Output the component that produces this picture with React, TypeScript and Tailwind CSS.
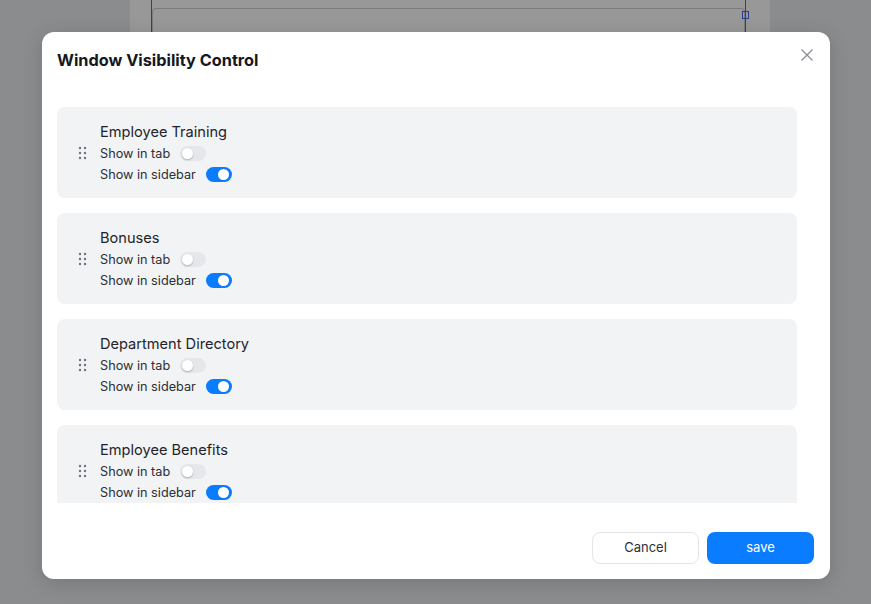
import React from "react";

const items = ["Employee Training", "Bonuses", "Department Directory", "Employee Benefits"];

function Toggle({ on }: { on: boolean }) {
  return (
    <span
      className={
        on
          ? "relative inline-flex h-[15px] w-[26px] items-center rounded-full bg-[#0a7cff]"
          : "relative inline-flex h-[15px] w-[26px] items-center rounded-full bg-[#e6e7ea]"
      }
    >
      <span
        className={
          on
            ? "absolute left-[12px] h-[11px] w-[11px] rounded-full bg-white"
            : "absolute left-[2px] h-[11px] w-[11px] rounded-full bg-white shadow-[0_1px_2px_rgba(0,0,0,0.25)]"
        }
      />
    </span>
  );
}

function Handle() {
  return (
    <svg width="10" height="14" viewBox="0 0 10 14" className="shrink-0">
      {[2, 7, 12].map((y) =>
        [2, 7].map((x) => <circle key={`${x}-${y}`} cx={x} cy={y} r="1.2" fill="#6b7280" />)
      )}
    </svg>
  );
}

function Card({ title }: { title: string }) {
  return (
    <div className="flex h-[91px] shrink-0 items-center rounded-lg bg-[#f2f3f5] pl-[20px]">
      <div className="w-[23px] pl-[1px]">
        <Handle />
      </div>
      <div className="flex flex-col pt-[2px]">
        <div className="text-[14.6px] leading-[20px] text-[#1f2329]">{title}</div>
        <div className="mt-[1px] flex h-[21px] items-center gap-[10px] text-[12.7px] text-[#2b2f36]">
          <span>Show in tab</span>
          <Toggle on={false} />
        </div>
        <div className="flex h-[21px] items-center gap-[10px] text-[12.7px] text-[#2b2f36]">
          <span>Show in sidebar</span>
          <Toggle on={true} />
        </div>
      </div>
    </div>
  );
}

export default function App() {
  return (
    <div
      className="relative h-[604px] w-[871px] overflow-hidden bg-[#8b8c8e]"
      style={{ fontFamily: "Inter, 'Noto Sans', sans-serif" }}
    >
      {/* background page under overlay */}
      <div className="absolute left-[130px] top-0 h-[560px] w-[640px] bg-[#989898]">
        <div className="absolute left-[21px] top-0 h-[40px] w-[1px] bg-[#2a3f8f]" />
        <div className="absolute left-[615px] top-0 h-[40px] w-[1px] bg-[#2a3f8f]" />
        <div className="absolute left-[22px] top-[8px] h-[40px] w-[593px] rounded-t-[4px] border border-b-0 border-[#7c7c7c]" />
        <div className="absolute left-[612px] top-[11px] h-[8px] w-[7px] border border-[#2a3f8f]" />
      </div>

      {/* modal */}
      <div className="absolute left-[42px] top-[32px] flex h-[547px] w-[788px] flex-col rounded-[12px] bg-white shadow-[0_4px_20px_rgba(0,0,0,0.15)]">
        <div className="relative px-[15px] pt-[17px]">
          <h2 className="text-[16.3px] font-bold leading-[22px] text-[#15181d]">
            Window Visibility Control
          </h2>
          <button className="absolute right-[16px] top-[16px] text-[#8a8f98]">
            <svg width="14" height="14" viewBox="0 0 14 14">
              <path d="M1.5 1.5 L12.5 12.5 M12.5 1.5 L1.5 12.5" stroke="#8a8f98" strokeWidth="1.3" fill="none" />
            </svg>
          </button>
        </div>
        <div className="mt-[36px] flex h-[396px] flex-col gap-[15px] overflow-hidden pl-[15px] pr-[33px]">
          {items.map((t) => (
            <Card key={t} title={t} />
          ))}
        </div>
        <div className="flex flex-1 items-start justify-end gap-[8px] px-[16px] pt-[29px]">
          <button className="h-[32px] w-[107px] rounded-[8px] border border-[#e3e5e8] bg-white text-[13px] text-[#2b2f36]">
            Cancel
          </button>
          <button className="h-[32px] w-[107px] rounded-[8px] bg-[#0a7cff] text-[13px] text-white">
            save
          </button>
        </div>
      </div>
    </div>
  );
}
